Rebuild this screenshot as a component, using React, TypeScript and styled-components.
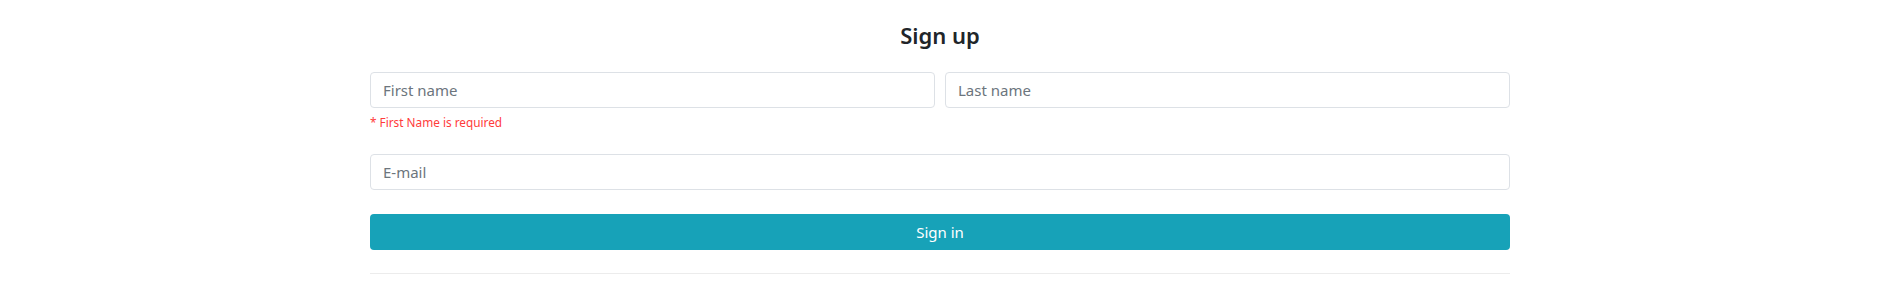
import styled, { createGlobalStyle } from 'styled-components';

const GlobalStyle = createGlobalStyle`
  * {
    box-sizing: border-box;
  }

  body {
    margin: 0;
    background: #ffffff;
    font-family: 'Noto Sans', 'Open Sans', sans-serif;
    color: #212529;
  }
`;

const Page = styled.div`
  width: 100%;
  display: flex;
  justify-content: center;
  padding-top: 20px;
`;

const Form = styled.form`
  width: 1140px;
  display: flex;
  flex-direction: column;
`;

const Title = styled.h4`
  margin: 0 0 22px;
  text-align: center;
  font-size: 22px;
  font-weight: 600;
  line-height: 30px;
  color: #212529;
`;

const Row = styled.div`
  display: grid;
  grid-template-columns: 1fr 1fr;
  gap: 10px;
`;

const Field = styled.div<{ $spacing?: number }>`
  display: flex;
  flex-direction: column;
  margin-bottom: ${({ $spacing }) => $spacing ?? 0}px;
`;

const Input = styled.input`
  width: 100%;
  height: 36px;
  padding: 0 12px;
  border: 1px solid #dde1e6;
  border-radius: 4px;
  background: #ffffff;
  font-family: inherit;
  font-size: 15px;
  color: #495057;
  outline: none;

  &::placeholder {
    color: #6c757d;
    opacity: 1;
  }
`;

const ErrorText = styled.span`
  margin-top: 6px;
  font-size: 11.8px;
  line-height: 16px;
  color: #ff3b3b;
`;

const SubmitButton = styled.button`
  width: 100%;
  height: 36px;
  border: none;
  border-radius: 4px;
  background: #17a2b8;
  color: #ffffff;
  font-family: inherit;
  font-size: 15px;
  cursor: pointer;
`;

const Divider = styled.hr`
  margin: 23px 0 0;
  border: none;
  border-top: 1px solid #ececec;
`;

const App = () => {
  return (
    <>
      <GlobalStyle />
      <Page>
        <Form onSubmit={e => e.preventDefault()}>
          <Title>Sign up</Title>
          <Row>
            <Field $spacing={24}>
              <Input placeholder="First name" />
              <ErrorText>* First Name is required</ErrorText>
            </Field>
            <Field>
              <Input placeholder="Last name" />
            </Field>
          </Row>
          <Field $spacing={24}>
            <Input type="email" placeholder="E-mail" />
          </Field>
          <SubmitButton type="submit">Sign in</SubmitButton>
          <Divider />
        </Form>
      </Page>
    </>
  );
};

export default App;
